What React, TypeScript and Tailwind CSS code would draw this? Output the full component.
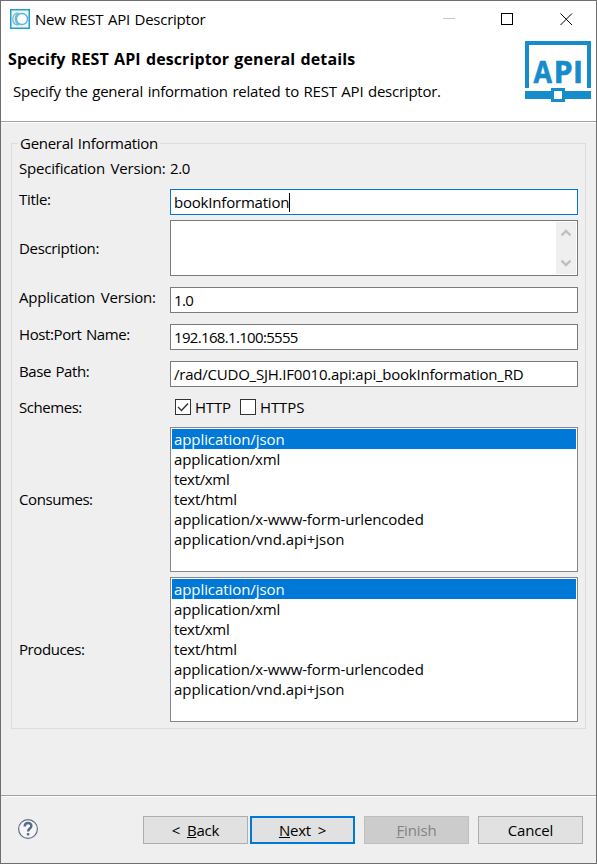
import type { ReactNode } from "react";

const mediaTypes = [
  { name: "application/json", cls: "tracking-[-0.08px]" },
  { name: "application/xml", cls: "tracking-[-0.13px]" },
  { name: "text/xml", cls: "tracking-[-0.33px]" },
  { name: "text/html", cls: "tracking-[-0.2px]" },
  { name: "application/x-www-form-urlencoded", cls: "tracking-[-0.12px]" },
  { name: "application/vnd.api+json", cls: "tracking-[-0.05px]" },
];

function Row({ label, className, labelClass, children }: { label: string; className: string; labelClass: string; children: ReactNode }) {
  return (
    <div className={`flex ${className}`}>
      <div className={`w-[151px] shrink-0 whitespace-nowrap ${labelClass}`}>{label}</div>
      {children}
    </div>
  );
}

function Field({ children, focused, className = "" }: { children: ReactNode; focused?: boolean; className?: string }) {
  return (
    <div className={`flex h-[26px] w-[408px] items-center border bg-white pl-[3px] whitespace-nowrap ${className} ${focused ? "border-[#0078d7]" : "border-[#7a7a7a]"}`}>
      {children}
    </div>
  );
}

function ListBox() {
  return (
    <div className="h-[145px] w-[408px] border border-[#828790] bg-white p-px">
      {mediaTypes.map((m, i) => (
        <div key={m.name} className={`h-5 pl-[2px] leading-5 ${m.cls} ${i === 0 ? "bg-[#0078d7] text-white" : ""}`}>
          {m.name}
        </div>
      ))}
    </div>
  );
}

function Logo() {
  return (
    <svg className="h-[61px] w-[66px]" viewBox="0 0 66 61">
      <path d="M0 0H66V47H62V4H4V47H0ZM0 50H66V58H0Z" fill="#168ccc" />
      <rect x="26" y="47" width="14" height="14" fill="#168ccc" />
      <rect x="29" y="50" width="8" height="8" fill="#fff" />
      <g fontFamily="Open Sans" fontWeight="700" fontSize="30" fill="#168ccc" stroke="#168ccc" strokeWidth="0.7" strokeLinejoin="round">
        <text x="8.5" y="41.5" textLength="18.5" lengthAdjust="spacingAndGlyphs">A</text>
        <text x="28.7" y="41.5">P</text>
        <text x="47.9" y="41.5">I</text>
      </g>
    </svg>
  );
}

export default function App() {
  return (
    <div className="flex h-[864px] w-[597px] flex-col overflow-hidden border border-[#6e6e6e] bg-[#efefef] font-['Open_Sans',sans-serif] text-[15px] leading-5 text-black">
      <header className="flex h-[121px] shrink-0 flex-col border-b border-[#a0a0a0] bg-white">
        <div className="flex h-9 items-center pl-[9px]">
          <svg className="h-5 w-5" viewBox="0 0 20 20">
            <rect x=".75" y=".75" width="18.5" height="18.5" fill="#eef8fc" stroke="#239fd3" strokeWidth="1.5" />
            <circle cx="12" cy="10" r="5.5" fill="#fff" stroke="#56b7dc" strokeWidth="1.4" />
            <path d="M8 3.8A6.3 6.3 0 0 0 8 16.2M9.8 4.2A6 6 0 0 0 9.8 15.8" fill="none" stroke="#73b9d2" strokeWidth="1.3" />
          </svg>
          <h1 className="ml-[5px] whitespace-nowrap tracking-[-0.25px] [word-spacing:1px]">New REST API Descriptor</h1>
          <svg className="ml-auto mr-[23px] h-[13px] w-[130px] shrink-0" viewBox="0 0 130 13">
            <path d="M0 5.5H12" stroke="#c6c6c6" />
            <rect x="58.5" y=".5" width="11" height="11" fill="none" stroke="#000" />
            <path d="M117.5.5L129 12M129 .5L117.5 12" stroke="#000" />
          </svg>
        </div>
        <div className="flex justify-between pl-[7px] pr-[5px] pt-1">
          <div className="pt-[8px] whitespace-nowrap">
            <h2 className="text-base leading-5 font-bold tracking-[0.1px] [word-spacing:1px]">Specify REST API descriptor general details</h2>
            <p className="pl-[5px] pt-[12px] tracking-[-0.24px] [word-spacing:1px]">Specify the general information related to REST API descriptor.</p>
          </div>
          <Logo />
        </div>
      </header>

      <main className="h-[673px] shrink-0 border-t border-white px-[10px] pt-[10px]">
        <fieldset className="h-[595px] w-[575px]">
          <div className="flex h-5 items-center">
            <div className="h-px w-[7px] bg-[#dcdcdc]" />
            <div className="w-[142px] whitespace-nowrap pl-[2px] tracking-[-0.28px] [word-spacing:1px]">General Information</div>
            <div className="h-px flex-1 bg-[#dcdcdc]" />
          </div>
          <div className="-mt-[10px] h-[586px] border border-t-0 border-[#dcdcdc] pl-[7px] pt-[15px]">
            <Row label="Specification Version:" className="h-[31px]" labelClass="tracking-[-0.2px] [word-spacing:2px]">
              <span className="tracking-[-0.4px]">2.0</span>
            </Row>
            <Row label="Title:" className="h-[31px]" labelClass="tracking-[-0.3px]">
              <Field focused className="tracking-[-0.2px]">
                bookInformation<span className="h-[19px] w-px bg-black" />
              </Field>
            </Row>
            <Row label="Description:" className="h-[67px]" labelClass="pt-[18px] tracking-[-0.33px]">
              <div className="flex h-14 w-[408px] justify-end border border-[#7a7a7a] bg-white p-px">
                <div className="flex h-[52px] w-5 flex-col items-center justify-between bg-[#efefef] py-[7px]">
                  <svg className="h-2 w-[10px]" viewBox="0 0 10 8"><path d="M.5 6.5L5 2L9.5 6.5" fill="none" stroke="#bfbfbf" strokeWidth="2.4" /></svg>
                  <svg className="h-2 w-[10px]" viewBox="0 0 10 8"><path d="M.5 1.5L5 6L9.5 1.5" fill="none" stroke="#bfbfbf" strokeWidth="2.4" /></svg>
                </div>
              </div>
            </Row>
            <Row label="Application Version:" className="h-[37px]" labelClass="tracking-[-0.2px] [word-spacing:2px]"><Field className="tracking-[-0.6px]">1.0</Field></Row>
            <Row label="Host:Port Name:" className="h-[37px]" labelClass="tracking-[-0.4px] [word-spacing:1px]"><Field className="tracking-[-0.67px]">192.168.1.100:5555</Field></Row>
            <Row label="Base Path:" className="h-[37px]" labelClass="tracking-[-0.4px] [word-spacing:1px]"><Field className="tracking-[-0.22px]">/rad/CUDO_SJH.IF0010.api:api_bookInformation_RD</Field></Row>
            <Row label="Schemes:" className="h-[29px] leading-[18px]" labelClass="tracking-[-0.45px]">
              <div className="flex h-[18px] items-center pl-[5px]">
                <div className="flex h-4 w-4 items-center justify-center border border-[#333] bg-white">
                  <svg className="h-3 w-3" viewBox="0 0 12 12"><path d="M1 6L4.5 9.5L11 2.5" fill="none" stroke="#333" strokeWidth="1.4" /></svg>
                </div>
                <span className="w-[49px] pl-1 tracking-[-0.2px]">HTTP</span>
                <div className="h-4 w-4 border border-[#333] bg-white" />
                <span className="pl-1 tracking-[-0.1px]">HTTPS</span>
              </div>
            </Row>
            <Row label="Consumes:" className="h-[150px]" labelClass="pt-[62px] tracking-[-0.42px]"><ListBox /></Row>
            <Row label="Produces:" className="h-[150px]" labelClass="pt-[62px] tracking-[-0.42px]"><ListBox /></Row>
          </div>
        </fieldset>
      </main>

      <footer className="flex h-[68px] shrink-0 border-t border-[#a0a0a0]">
        <div className="flex w-full border-t border-white pt-[19px]">
          <svg className="ml-4 mt-[2px] h-[22px] w-[22px]" viewBox="0 0 22 22">
            <circle cx="11" cy="11" r="9.4" fill="#f5f5f6" stroke="#61708a" strokeWidth="1.2" />
            <path d="M7.7 8.5C7.7 3.8 14.5 4 14.4 8C14.4 10.6 11.1 10.5 11.1 13.4" fill="none" stroke="#566985" strokeWidth="2.4" />
            <rect x="9.8" y="15" width="2.6" height="2.6" rx="1" fill="#566985" />
          </svg>
          <button className="ml-[104px] h-7 w-[105px] border border-[#adadad] bg-[#e1e1e1] tracking-[-0.2px] [word-spacing:3px]">&lt; <u>B</u>ack</button>
          <button className="ml-[2px] h-7 w-[105px] border-2 border-[#0078d7] bg-[#e1e1e1] tracking-[-0.2px] [word-spacing:3px]"><u>N</u>ext &gt;</button>
          <button className="ml-[9px] h-7 w-[105px] border border-[#bfbfbf] bg-[#cccccc] tracking-[-0.15px] text-[#838383]"><u>F</u>inish</button>
          <button className="ml-[9px] h-7 w-[105px] border border-[#adadad] bg-[#e1e1e1] tracking-[-0.15px]">Cancel</button>
        </div>
      </footer>
    </div>
  );
}
